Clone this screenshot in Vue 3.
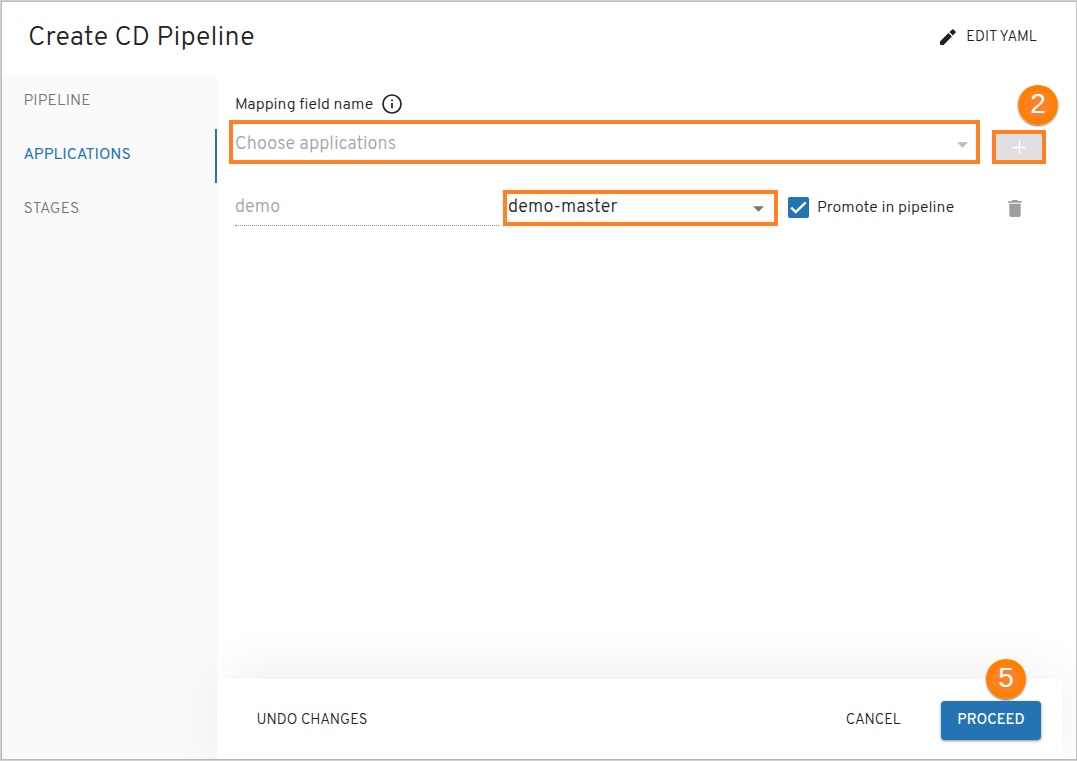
<script setup>
import { ref } from 'vue'

const tabs = [
  { label: 'PIPELINE', cls: 't-pipeline' },
  { label: 'APPLICATIONS', cls: 't-apps' },
  { label: 'STAGES', cls: 't-stages' },
]
const active = ref('APPLICATIONS')
</script>

<template>
  <div class="dialog">
    <header class="header">
      <h1 class="title"><span>Create CD Pipeline</span></h1>
      <button class="edit">
        <svg class="pencil" viewBox="0 0 16 16"><path d="M0 12.4V15a1 1 0 0 0 1 1h2.6l8.3-8.5-3.5-3.5zM12.8 6.6l2.7-2.8a1 1 0 0 0 0-1.3L13.7.5a1 1 0 0 0-1.4 0L9.4 3.1z" /></svg>
        <span>EDIT YAML</span>
      </button>
    </header>

    <div class="body">
      <nav class="sidebar">
        <button
          v-for="tab in tabs"
          :key="tab.label"
          class="tab"
          :class="[tab.cls, { active: active === tab.label }]"
          @click="active = tab.label"
        ><span>{{ tab.label }}</span></button>
      </nav>

      <section class="content">
        <div class="form">
          <div class="field-label">
            <span>Mapping field name</span>
            <svg class="info" viewBox="0 0 20 20"><circle cx="10" cy="10" r="9" /><path d="M10 9v5.2M10 5.6v1.7" /></svg>
          </div>

          <div class="choose-row">
            <div class="select choose">
              <span>Choose applications</span>
              <svg class="caret" viewBox="0 0 10 5"><path d="M0 0h10L5 5z" /></svg>
            </div>
            <div class="add-wrap">
              <button class="add"><svg viewBox="0 0 14 14"><path d="M7.5 .5v13M.5 7.5h13" /></svg></button>
              <span class="badge">2</span>
            </div>
          </div>

          <div class="app-row">
            <div class="name"><span>demo</span></div>
            <div class="select branch">
              <span>demo-master</span>
              <svg class="caret" viewBox="0 0 10 5"><path d="M0 0h10L5 5z" /></svg>
            </div>
            <div class="check"><svg viewBox="0 0 21 21"><path d="M3.2 10.6l4.6 4.4L17.7 5.3" /></svg></div>
            <span class="promote">Promote in pipeline</span>
            <svg class="trash" viewBox="0 0 14 18"><path d="M1 16c0 1.1.9 2 2 2h8c1.1 0 2-.9 2-2V4H1v12zM14 1h-3.5l-1-1h-5l-1 1H0v2h14V1z" /></svg>
          </div>
        </div>

        <footer class="footer">
          <button class="undo"><span>UNDO CHANGES</span></button>
          <button class="cancel"><span>CANCEL</span></button>
          <div class="proceed-wrap">
            <button class="proceed"><span>PROCEED</span></button>
            <span class="badge">5</span>
          </div>
        </footer>
      </section>
    </div>
  </div>
</template>

<style>
body { background: #fff; overflow: hidden; }
</style>

<style scoped>
* { box-sizing: border-box; }
button { border: 0; padding: 0; background: none; font: inherit; color: inherit; text-align: left; letter-spacing: inherit; }
span { white-space: nowrap; }

.dialog {
  width: 1077px;
  height: 761px;
  display: flex;
  flex-direction: column;
  border: 1px solid #d0d0d0;
  border-right-color: #c4c4c4;
  box-shadow: inset 1px 1px #b9b9b9, inset 0 -1px #b9b9b9;
  padding: 1px 0 1px 1px;
  background: #fff;
  color: #212121;
  font-family: Overpass, Roboto, sans-serif;
  overflow: hidden;
}
.header { height: 73px; flex: none; display: flex; align-items: flex-start; justify-content: space-between; padding: 0 39px 0 26px; }
.title { margin: 19px 0 0; font-size: 27px; line-height: 34px; font-weight: 300; letter-spacing: .15px; }
.edit { display: flex; align-items: center; margin-top: 25px; font-size: 14.7px; line-height: 22px; font-weight: 300; letter-spacing: .06px; }
.pencil { width: 16px; height: 16px; margin: -2px 10.5px 0 0; fill: #212121; }

.body { flex: 1; display: flex; min-height: 0; }
.sidebar { width: 215px; background: #fafafa; border-radius: 4px 4px 0 0; }
.tab { display: flex; align-items: center; width: 100%; height: 54px; padding: 0 0 2px 21.5px; font-size: 15.8px; font-weight: 300; letter-spacing: .08px; color: #757575; }
.tab.active { color: #2473b3; border-right: 2px solid #2473b3; font-weight: 400; font-size: 15.7px; letter-spacing: 0; }

.content { flex: 1; min-width: 0; display: flex; flex-direction: column; }
.form { flex: 1; padding: 17px 0 0 12px; }
.field-label { display: flex; align-items: center; height: 24px; padding-left: 6px; font-size: 15.9px; font-weight: 300; }
.field-label span { margin-top: 2px; }
.info { width: 20px; height: 20px; margin: 0 0 0 9px; fill: none; stroke: #212121; stroke-width: 1.7; }
.choose-row { display: flex; align-items: flex-end; margin-top: 4px; }
.select { display: flex; align-items: center; justify-content: space-between; border: 4px solid #ff8126; font-size: 18px; font-weight: 300; }
.choose { width: 751px; height: 44px; padding: 5px 8px 0 2px; color: #a2a2a2; letter-spacing: .08px; }
.caret { width: 11px; height: 6px; fill: #bcbcbc; }
.add-wrap { position: relative; margin-left: 12px; width: 54px; height: 34px; }
.add { display: flex; align-items: center; justify-content: center; width: 54px; height: 34px; border: 4px solid #ff8126; background: #e0e0e0; }
.add svg { width: 14px; height: 14px; stroke: #fff; stroke-width: 1.3; fill: none; }
.badge { position: absolute; width: 40px; height: 40px; border-radius: 50%; background: radial-gradient(circle, #ff8126 0 13px, #ff8000 15px); color: #fff; font: 28px/38px "Liberation Sans", Arial, sans-serif; letter-spacing: 0; text-align: center; box-shadow: 0 1px 2px rgba(0, 0, 0, .55); }
.add-wrap .badge { left: 26px; top: -45px; }

.app-row { display: flex; align-items: center; height: 36px; margin-top: 26px; }
.name { align-self: stretch; width: 264px; margin-left: 6px; border-bottom: 1px dotted #8a8a8a; color: #a2a2a2; font-size: 18px; font-weight: 300; line-height: 36px; }
.branch { width: 275px; height: 36px; margin-left: 4px; padding: 0 10px 0 1px; letter-spacing: .1px; }
.branch span { margin-top: -2px; }
.branch .caret { fill: #757575; margin-top: 1px; }
.check { width: 21px; height: 21px; margin: -2px 0 0 10px; border-radius: 2px; background: #2473b3; }
.check svg { display: block; width: 21px; height: 21px; fill: none; stroke: #fff; stroke-width: 2.4; }
.promote { width: 150px; margin: -1px 0 0 8px; font-size: 15.9px; font-weight: 300; }
.trash { width: 14px; height: 17px; margin: 0 0 0 41px; fill: #9e9e9e; }

.footer { position: relative; display: flex; align-items: flex-start; width: 846px; height: 80px; background: #fff; box-shadow: 0 -4px 64px -10px rgba(0, 0, 0, .11); padding: 22px 22px 0 39.5px; font-size: 14.7px; font-weight: 300; letter-spacing: .06px; }
.footer button { height: 39px; display: flex; align-items: center; }
.cancel { margin-left: auto; margin-right: 40px; }
.proceed-wrap { position: relative; }
.footer .proceed { width: 100px; justify-content: center; border-radius: 4px; background: #2473b3; color: #fff; font-weight: 500; box-shadow: 0 1px 3px rgba(0, 0, 0, .45); }
.proceed-wrap .badge { left: 45px; top: -42px; }
</style>
